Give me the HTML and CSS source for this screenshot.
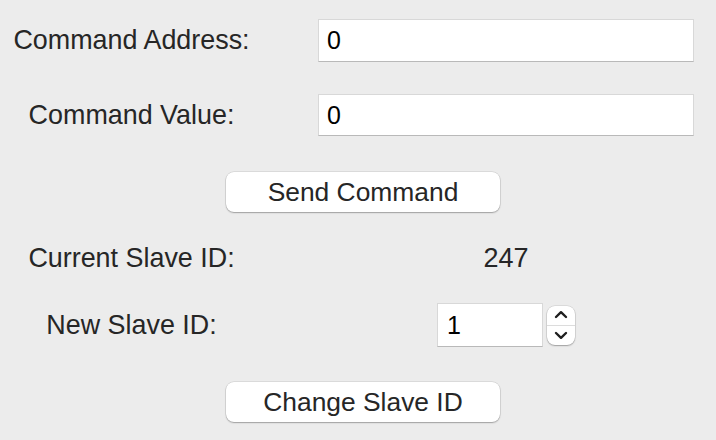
FILE: index.html
```html
<!DOCTYPE html>
<html>
<head>
<meta charset="utf-8">
<link rel="stylesheet" href="styles.css">
</head>
<body>
<div class="form">
  <div class="row row-addr">
    <div class="label">Command Address:</div>
    <div class="control"><div class="field">0</div></div>
  </div>
  <div class="row row-value">
    <div class="label">Command Value:</div>
    <div class="control"><div class="field field-short">0</div></div>
  </div>
  <div class="btn-row row-send">
    <button class="btn">Send Command</button>
  </div>
  <div class="row row-current">
    <div class="label">Current Slave ID:</div>
    <div class="control value">247</div>
  </div>
  <div class="row row-new">
    <div class="label">New Slave ID:</div>
    <div class="control spin-group">
      <div class="field spin-field">1</div>
      <div class="stepper">
        <div class="step step-up">
          <svg width="14" height="9" viewBox="0 0 14 9"><path d="M2 7 L7 2.2 L12 7" fill="none" stroke="#1e1e1e" stroke-width="2.4" stroke-linecap="round" stroke-linejoin="round"/></svg>
        </div>
        <div class="step step-down">
          <svg width="14" height="9" viewBox="0 0 14 9"><path d="M2 2 L7 6.8 L12 2" fill="none" stroke="#1e1e1e" stroke-width="2.4" stroke-linecap="round" stroke-linejoin="round"/></svg>
        </div>
      </div>
    </div>
  </div>
  <div class="btn-row row-change">
    <button class="btn">Change Slave ID</button>
  </div>
</div>
</body>
</html>
```

FILE: styles.css
```css
html, body {
  margin: 0;
  padding: 0;
  background: #ececec;
}
body {
  width: 716px;
  height: 440px;
  overflow: hidden;
  font-family: "Liberation Sans", Arial, sans-serif;
  color: #262626;
}
.form {
  display: flex;
  flex-direction: column;
  padding-top: 19px;
}
.row {
  display: flex;
  align-items: center;
}
.label {
  width: 263px;
  text-align: center;
  font-size: 26.9px;
  white-space: nowrap;
}
.control {
  margin-left: 55px;
  width: 376px;
}
.field {
  box-sizing: border-box;
  height: 43px;
  background: #fff;
  border: 1px solid #d8d8d8;
  border-bottom-color: #b9b9b9;
  padding-left: 8px;
  font-size: 25px;
  color: #000;
  display: flex;
  align-items: center;
}
.field-short {
  height: 42px;
}
.row-value {
  margin-top: 32px;
}
.btn-row {
  display: flex;
  padding-left: 226px;
}
.btn {
  box-sizing: border-box;
  width: 274px;
  height: 40px;
  background: #fff;
  border: none;
  border-radius: 8px;
  box-shadow: 0 0 0 0.5px rgba(0,0,0,0.14), 0 1px 1.5px rgba(0,0,0,0.28);
  font-family: "Liberation Sans", Arial, sans-serif;
  font-size: 26.4px;
  color: #262626;
  padding: 0;
}
.row-send {
  margin-top: 36px;
}
.row-current {
  margin-top: 26px;
  height: 40px;
}
.value {
  text-align: center;
  font-size: 27px;
}
.row-new {
  margin-top: 25px;
}
.spin-group {
  display: flex;
  justify-content: center;
  align-items: center;
  gap: 4px;
}
.spin-field {
  width: 106px;
  height: 44px;
  padding-left: 9px;
}
.stepper {
  box-sizing: border-box;
  width: 28px;
  height: 39px;
  background: #fff;
  border-radius: 8px;
  box-shadow: 0 0 0 0.5px rgba(0,0,0,0.14), 0 1px 1.5px rgba(0,0,0,0.28);
  display: flex;
  flex-direction: column;
}
.step {
  flex: 1;
  display: flex;
  justify-content: center;
  align-items: center;
}
.step-up {
  padding-bottom: 1px;
}
.step-down {
  border-top: 1px solid #dcdcdc;
}
.row-change {
  margin-top: 35px;
}
```
